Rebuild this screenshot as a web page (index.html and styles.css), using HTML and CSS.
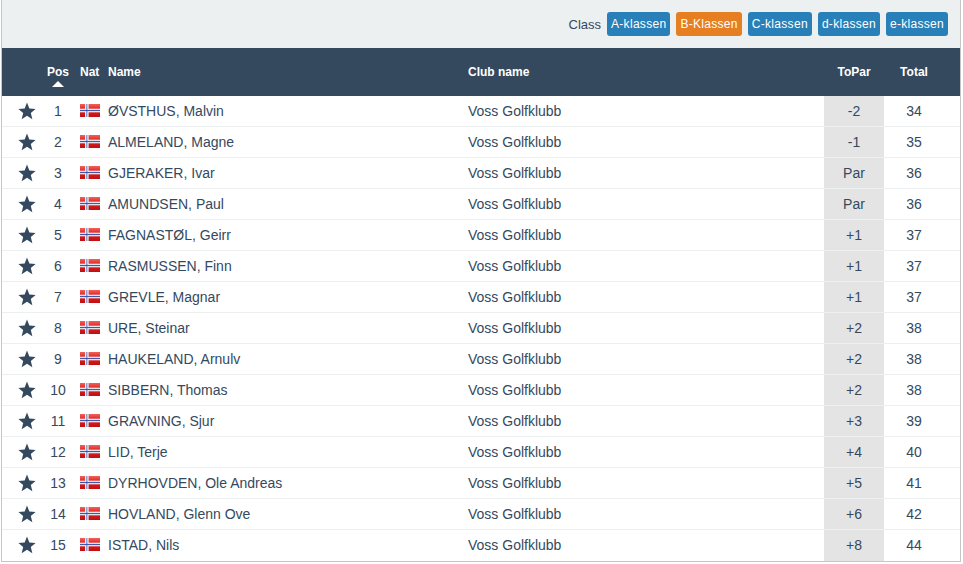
FILE: index.html
```html
<!DOCTYPE html>
<html lang="no">
<head>
<meta charset="utf-8">
<title>Leaderboard</title>
<link rel="stylesheet" href="styles.css">
</head>
<body>
<svg class="defs" width="0" height="0" aria-hidden="true">
  <defs>
    <linearGradient id="gloss" x1="0" y1="0" x2="0" y2="1">
      <stop offset="0" stop-color="#f0625a"/>
      <stop offset=".4" stop-color="#e02424"/>
      <stop offset="1" stop-color="#c00f12"/>
    </linearGradient>
  </defs>
  <symbol id="star" viewBox="0 0 18 18"><path d="M9 .6l2.35 5.9 6.25.45-4.8 4.05 1.55 6.15L9 13.8l-5.35 3.35L5.2 11 .4 6.95l6.25-.45z"/></symbol>
  <symbol id="flag" viewBox="0 0 20 13" preserveAspectRatio="none">
    <rect width="20" height="13" fill="url(#gloss)"/>
    <rect x="5" width="3.6" height="13" fill="#f2f3f8"/>
    <rect y="4.7" width="20" height="3.6" fill="#f2f3f8"/>
    <rect x="6.2" width="1.2" height="13" fill="#6f8ccc"/>
    <rect y="5.9" width="20" height="1.2" fill="#3a5aaa"/>
  </symbol>
</svg>
<main class="panel">
  <div class="toolbar">
    <span class="toolbar-label">Class</span>
    <a class="btn">A-klassen</a>
    <a class="btn btn-active">B-Klassen</a>
    <a class="btn">C-klassen</a>
    <a class="btn">d-klassen</a>
    <a class="btn">e-klassen</a>
  </div>
  <table class="board">
    <colgroup>
      <col class="c-star"><col class="c-pos"><col class="c-nat"><col class="c-name"><col class="c-club"><col class="c-par"><col class="c-total">
    </colgroup>
    <thead>
      <tr>
        <th></th>
        <th class="center sorted">Pos</th>
        <th class="left">Nat</th>
        <th class="left">Name</th>
        <th class="left">Club name</th>
        <th class="center">ToPar</th>
        <th class="center total">Total</th>
      </tr>
    </thead>
    <tbody>
      <tr><td><svg class="star"><use href="#star"/></svg></td><td class="center">1</td><td><svg class="flag"><use href="#flag"/></svg></td><td>ØVSTHUS, Malvin</td><td>Voss Golfklubb</td><td class="center par">-2</td><td class="center total">34</td></tr>
      <tr><td><svg class="star"><use href="#star"/></svg></td><td class="center">2</td><td><svg class="flag"><use href="#flag"/></svg></td><td>ALMELAND, Magne</td><td>Voss Golfklubb</td><td class="center par">-1</td><td class="center total">35</td></tr>
      <tr><td><svg class="star"><use href="#star"/></svg></td><td class="center">3</td><td><svg class="flag"><use href="#flag"/></svg></td><td>GJERAKER, Ivar</td><td>Voss Golfklubb</td><td class="center par">Par</td><td class="center total">36</td></tr>
      <tr><td><svg class="star"><use href="#star"/></svg></td><td class="center">4</td><td><svg class="flag"><use href="#flag"/></svg></td><td>AMUNDSEN, Paul</td><td>Voss Golfklubb</td><td class="center par">Par</td><td class="center total">36</td></tr>
      <tr><td><svg class="star"><use href="#star"/></svg></td><td class="center">5</td><td><svg class="flag"><use href="#flag"/></svg></td><td>FAGNASTØL, Geirr</td><td>Voss Golfklubb</td><td class="center par">+1</td><td class="center total">37</td></tr>
      <tr><td><svg class="star"><use href="#star"/></svg></td><td class="center">6</td><td><svg class="flag"><use href="#flag"/></svg></td><td>RASMUSSEN, Finn</td><td>Voss Golfklubb</td><td class="center par">+1</td><td class="center total">37</td></tr>
      <tr><td><svg class="star"><use href="#star"/></svg></td><td class="center">7</td><td><svg class="flag"><use href="#flag"/></svg></td><td>GREVLE, Magnar</td><td>Voss Golfklubb</td><td class="center par">+1</td><td class="center total">37</td></tr>
      <tr><td><svg class="star"><use href="#star"/></svg></td><td class="center">8</td><td><svg class="flag"><use href="#flag"/></svg></td><td>URE, Steinar</td><td>Voss Golfklubb</td><td class="center par">+2</td><td class="center total">38</td></tr>
      <tr><td><svg class="star"><use href="#star"/></svg></td><td class="center">9</td><td><svg class="flag"><use href="#flag"/></svg></td><td>HAUKELAND, Arnulv</td><td>Voss Golfklubb</td><td class="center par">+2</td><td class="center total">38</td></tr>
      <tr><td><svg class="star"><use href="#star"/></svg></td><td class="center">10</td><td><svg class="flag"><use href="#flag"/></svg></td><td>SIBBERN, Thomas</td><td>Voss Golfklubb</td><td class="center par">+2</td><td class="center total">38</td></tr>
      <tr><td><svg class="star"><use href="#star"/></svg></td><td class="center">11</td><td><svg class="flag"><use href="#flag"/></svg></td><td>GRAVNING, Sjur</td><td>Voss Golfklubb</td><td class="center par">+3</td><td class="center total">39</td></tr>
      <tr><td><svg class="star"><use href="#star"/></svg></td><td class="center">12</td><td><svg class="flag"><use href="#flag"/></svg></td><td>LID, Terje</td><td>Voss Golfklubb</td><td class="center par">+4</td><td class="center total">40</td></tr>
      <tr><td><svg class="star"><use href="#star"/></svg></td><td class="center">13</td><td><svg class="flag"><use href="#flag"/></svg></td><td>DYRHOVDEN, Ole Andreas</td><td>Voss Golfklubb</td><td class="center par">+5</td><td class="center total">41</td></tr>
      <tr><td><svg class="star"><use href="#star"/></svg></td><td class="center">14</td><td><svg class="flag"><use href="#flag"/></svg></td><td>HOVLAND, Glenn Ove</td><td>Voss Golfklubb</td><td class="center par">+6</td><td class="center total">42</td></tr>
      <tr><td><svg class="star"><use href="#star"/></svg></td><td class="center">15</td><td><svg class="flag"><use href="#flag"/></svg></td><td>ISTAD, Nils</td><td>Voss Golfklubb</td><td class="center par">+8</td><td class="center total">44</td></tr>
    </tbody>
  </table>
</main>
</body>
</html>
```
FILE: styles.css
```css
* { box-sizing: border-box; }
html, body { margin: 0; padding: 0; background: #fff; overflow: hidden; }
body { font-family: "Liberation Sans", Arial, sans-serif; font-size: 14px; color: #34495e; }
.defs { display: block; height: 0; }
.panel {
  width: 960px;
  margin-left: 1px;
  border-left: 1px solid #c4c6c8;
  border-right: 1px solid #c4c6c8;
  border-bottom: 1px solid #c4c6c8;
  box-shadow: 0 1px 0 #e4e6e8;
}
.toolbar {
  height: 48px;
  background: #ecf0f1;
  display: flex;
  align-items: center;
  justify-content: flex-end;
  gap: 6px;
  padding-right: 12px;
}
.toolbar-label { font-size: 13px; }
.btn {
  height: 24px;
  line-height: 24px;
  padding: 0 4px;
  font-size: 12px;
  letter-spacing: .3px;
  color: #fff;
  background: #2980b9;
  border-radius: 3px;
}
.btn-active { background: #e67e22; }
.board { width: 958px; border-collapse: separate; border-spacing: 0; table-layout: fixed; }
.c-star { width: 38px; }
.c-pos { width: 36px; }
.c-nat { width: 28px; }
.c-name { width: 360px; }
.c-club { width: 360px; }
.c-par { width: 60px; }
.c-total { width: 76px; }
thead tr { height: 48px; background: #34495e; }
th { padding: 0 4px; font-size: 12px; font-weight: bold; color: #fff; }
.left { text-align: left; }
.center { text-align: center; }
.total { padding-right: 20px; }
.sorted { position: relative; }
.sorted::after {
  content: "";
  position: absolute;
  left: 50%;
  bottom: 9px;
  margin-left: -6px;
  border-left: 6px solid transparent;
  border-right: 6px solid transparent;
  border-bottom: 6px solid #fff;
}
tbody tr { height: 31px; }
td { padding: 0 4px; white-space: nowrap; border-bottom: 1px solid #ecf0f1; }
tbody tr:last-child td { border-bottom-color: transparent; }
.par { background: #e4e4e4; }
.star { display: block; width: 18px; height: 18px; margin-left: 12px; fill: #34495e; }
.flag { display: block; width: 20px; height: 13px; margin-top: -2px; }
```
